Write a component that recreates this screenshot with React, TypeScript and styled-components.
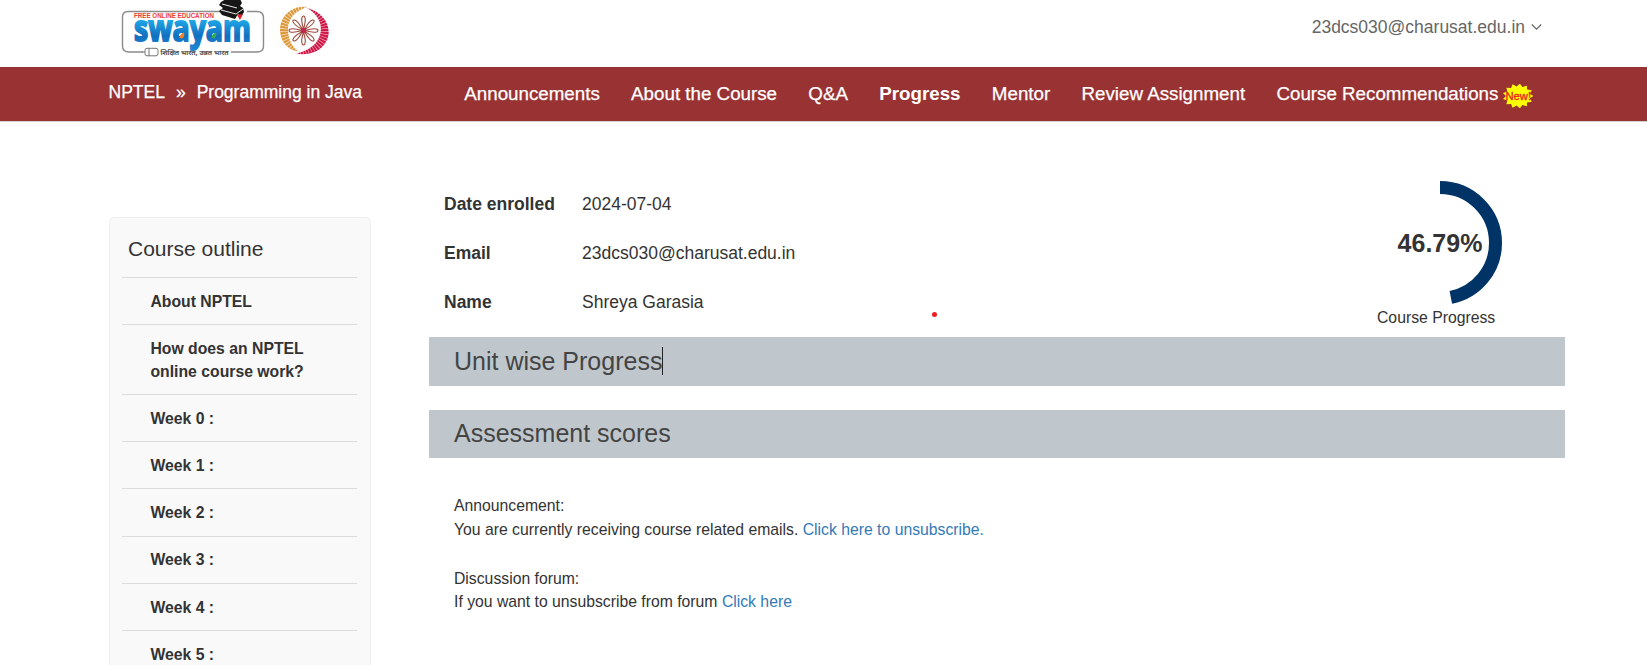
import React from "react";
import styled, { createGlobalStyle } from "styled-components";

const GlobalStyle = createGlobalStyle`
  *, *::before, *::after { box-sizing: border-box; }
  html, body { margin: 0; background: #fff; }
  body {
    font-family: "Liberation Sans", Arial, Helvetica, sans-serif;
    font-size: 15.75px;
    color: #333;
    height: 665px;
    overflow: hidden;
  }
`;

const Page = styled.div`
  position: relative;
  height: 665px;
  overflow: hidden;
`;

const Header = styled.header`
  display: flex;
  justify-content: space-between;
  height: 67px;
  padding: 0 105.5px 0 121px;
`;

const Logos = styled.div`
  display: flex;
  gap: 14px;
`;

const Account = styled.button`
  display: flex;
  align-items: center;
  gap: 5.5px;
  height: 54px;
  padding: 0;
  border: 0;
  background: none;
  font: inherit;
  font-size: 17.5px;
  color: #666;
`;

const NavBar = styled.nav`
  display: flex;
  height: 55px;
  padding-left: 108.5px;
  background: #993333;
  border-bottom: 1px solid #d3cfcf;
  color: #fff;
`;

const Crumbs = styled.div`
  display: flex;
  width: 355.8px;
  height: 50px;
  align-items: center;
  gap: 11px;
  font-size: 17.5px;
  white-space: nowrap;
  -webkit-text-stroke: 0.25px #fff;
`;

const NavLinks = styled.div`
  display: flex;
  align-items: center;
  height: 53px;
  gap: 31.3px;
  font-size: 18.75px;
  white-space: nowrap;
`;

const NavLink = styled.a<{ $active?: boolean }>`
  display: flex;
  align-items: center;
  gap: 5px;
  font-weight: ${(p) => (p.$active ? 700 : 400)};
  -webkit-text-stroke: ${(p) => (p.$active ? "0" : "0.25px #fff")};
`;

const Body = styled.main`
  display: flex;
  align-items: flex-start;
  padding-left: 109px;
`;

const Sidebar = styled.aside`
  width: 262px;
  height: 520px;
  margin-top: 95px;
  padding: 0 12px;
  border: 1px solid #efefef;
  border-radius: 5px;
  background: #f9f9f9;
`;

const SidebarTitle = styled.h2`
  margin: 0;
  padding-left: 6px;
  height: 59px;
  line-height: 61px;
  font-size: 21px;
  font-weight: 400;
`;

const OutlineItem = styled.div`
  padding: 12.8px 28px 10.95px 28.5px;
  border-top: 1px solid #dcdcdc;
  line-height: 22.5px;
  font-weight: 700;
  width: 235px;
`;

const Content = styled.section`
  width: 1136px;
  margin-left: 58px;
`;

const Summary = styled.div`
  display: flex;
  justify-content: space-between;
  height: 215px;
  padding: 57px 63px 0 15px;
`;

const Details = styled.dl`
  display: grid;
  grid-template-columns: 138px auto;
  grid-auto-rows: 49px;
  align-items: center;
  margin: 1px 0 0;
  height: 147px;
  font-size: 17.5px;
`;

const Term = styled.dt`
  font-weight: 700;
`;

const Value = styled.dd`
  margin: 0;
`;

const Gauge = styled.div`
  width: 125px;
  padding-top: 2px;
`;

const Dial = styled.div`
  display: grid;
  margin-left: 1px;
  width: 124px;
  height: 124px;
  > * { grid-area: 1 / 1; }
`;

const Percent = styled.strong`
  place-self: center;
  font-size: 25px;
  line-height: 124px;
`;

const GaugeLabel = styled.div`
  line-height: 25px;
  white-space: nowrap;
`;

const Bar = styled.h3<{ $height: number }>`
  display: flex;
  align-items: center;
  height: ${(p) => p.$height}px;
  margin: 0 0 24px;
  padding: 0 0 1px 25px;
  background: #bfc7cd;
  color: #444;
  font-size: 25px;
  font-weight: 400;
`;

const Caret = styled.span`
  width: 1px;
  height: 28px;
  background: #222;
`;

const Notices = styled.div`
  padding: 12px 25px 0;
  line-height: 23.5px;
`;

const Notice = styled.p`
  margin: 0 0 25.5px;
`;

const Link = styled.a`
  color: #337ab7;
`;

const Pointer = styled.span`
  position: absolute;
  left: 931.5px;
  top: 312px;
  width: 5px;
  height: 5px;
  border-radius: 50%;
  background: #ed1c24;
`;

const BadgeIcon = styled.svg`
  margin-top: 4px;
`;

const SwayamLogo = () => (
  <svg width="144" height="60" viewBox="121 0 144 60">
    <defs>
      <linearGradient id="wordmark" x1="0" y1="20" x2="0" y2="49" gradientUnits="userSpaceOnUse">
        <stop offset="0" stopColor="#1fa8e6" />
        <stop offset="0.55" stopColor="#126fc0" />
        <stop offset="1" stopColor="#1e86d0" />
      </linearGradient>
    </defs>
    <path d="M143 52H129Q122.500 52 122.500 46V17Q122.500 11.500 128 11.500H257Q263.500 11.500 263.500 18V46Q263.500 52 257 52H231" fill="none" stroke="#8b8b8b" strokeWidth="1.4" />
    <rect x="145" y="48.300" width="13" height="7.500" rx="2" fill="#fff" stroke="#777" strokeWidth="1" />
    <path d="M149 48.300V56M142 52H145" stroke="#777" />
    <rect x="238" y="8" width="9" height="8" fill="#fff" />
    <text x="134" y="18.300" fontSize="6.500" fontWeight="700" fill="#f03a35" fontFamily="Liberation Sans" textLength="80" lengthAdjust="spacingAndGlyphs">FREE ONLINE EDUCATION</text>
    <text x="134" y="41" fontSize="36.500" fontWeight="700" fill="url(#wordmark)" stroke="url(#wordmark)" strokeWidth="2" fontFamily="Open Sans" textLength="117" lengthAdjust="spacingAndGlyphs">swayam</text>
    <path d="M179.500 38Q180 33.500 184 32.500Q185 37 182 38.500Z" fill="#f58220" />
    <path d="M211.500 38Q212 33.500 216 32.500Q217 37 214 38.500Z" fill="#35a853" />
    <path d="M221 2L226 -1H240L242 3L240 6L243 8L244 12L241 17L238 14L235 19L222 15L219 11L223 8L219 5Z" fill="#161616" />
    <path d="M222 4L237 8M221 10L236 14L243 9" fill="none" stroke="#fff" strokeWidth="0.900" />
    <path d="M237 15L243 14L240 20Z" fill="#e8222a" />
    <text x="160.500" y="54.500" fontSize="6.500" fill="#444" stroke="#444" strokeWidth="0.200" fontFamily="Noto Sans Devanagari, sans-serif" textLength="68" lengthAdjust="spacingAndGlyphs">शिक्षित भारत, उन्नत भारत</text>
  </svg>
);

const Emblem = () => (
  <svg width="50" height="60" viewBox="279 0 50 60">
    <path d="M307 7C291 5 279.500 17 280 31C280.500 42 288 50 298 51.500C291 45 288 38 288 29C288 19 295 11 307 7Z" fill="#dc9a3c" />
    <path d="M307 8C320 11 329 21 328.700 33C327.500 47 314 57 296 53.500C309 51 320 43 320.800 30C321.500 22 317 14 307 8Z" fill="#cf1748" />
    <path d="M305 9C292 10 284 20 284 31C284.500 41 290 47 298 51.500" fill="none" stroke="#fff" strokeWidth="10" strokeDasharray="0.700 2.100" opacity="0.750" />
    <path d="M308 8.500C318 13 325 21 324.500 33C323 44 312 53 297 53.500" fill="none" stroke="#fff" strokeWidth="10" strokeDasharray="0.600 2.100" opacity="0.700" />
    <g fill="#fff" stroke="#9a4a3c" strokeWidth="1.1">
      {[0, 45, 90, 135, 180, 225, 270, 315].map((a) => (
        <path key={a} transform={`rotate(${a} 303.500 30.500)`} d="M303.500 29Q300.700 20 302.300 16.800Q303.500 15.200 304.700 16.800Q306.300 20 303.500 29Z" />
      ))}
    </g>
    <circle cx="303.500" cy="30.500" r="2.800" fill="#c2274a" />
  </svg>
);

const burst = Array.from({ length: 26 }, (_, i) => {
  const a = (i * Math.PI) / 13;
  const k = i % 2 ? 0.8 : 1.04;
  return `${(15 + 15 * k * Math.cos(a)).toFixed(1)},${(12 + 12 * k * Math.sin(a)).toFixed(1)}`;
}).join(" ");

const NewBadge = () => (
  <BadgeIcon width="30" height="24" viewBox="0 0 30 24">
    <polygon points={burst} fill="#ffff00" />
    <text x="2.500" y="16" fontSize="11" fontFamily="Liberation Sans" fill="#e8201a" stroke="#e8201a" strokeWidth="0.300" textLength="25.500" lengthAdjust="spacingAndGlyphs">New!</text>
  </BadgeIcon>
);

const navItems = ["Announcements", "About the Course", "Q&A", "Progress", "Mentor", "Review Assignment", "Course Recommendations"];
const outline = ["About NPTEL", "How does an NPTEL online course work?", "Week 0 :", "Week 1 :", "Week 2 :", "Week 3 :", "Week 4 :", "Week 5 :"];
const details = [
  ["Date enrolled", "2024-07-04"],
  ["Email", "23dcs030@charusat.edu.in"],
  ["Name", "Shreya Garasia"],
];

export default function App() {
  const circumference = 2 * Math.PI * 55.5;
  return (
    <Page>
      <GlobalStyle />
      <Header>
        <Logos>
          <SwayamLogo />
          <Emblem />
        </Logos>
        <Account>
          23dcs030@charusat.edu.in
          <svg width="11" height="8" viewBox="0 0 11 8">
            <path d="M0.800 1.500L5.500 6.200L10.200 1.500" fill="none" stroke="#666" strokeWidth="1.200" />
          </svg>
        </Account>
      </Header>
      <NavBar>
        <Crumbs>
          <span>NPTEL</span>
          <span>»</span>
          <span>Programming in Java</span>
        </Crumbs>
        <NavLinks>
          {navItems.map((item) => (
            <NavLink key={item} $active={item === "Progress"}>
              {item}
              {item === "Course Recommendations" && <NewBadge />}
            </NavLink>
          ))}
        </NavLinks>
      </NavBar>
      <Body>
        <Sidebar>
          <SidebarTitle>Course outline</SidebarTitle>
          {outline.map((item) => (
            <OutlineItem key={item}>{item}</OutlineItem>
          ))}
        </Sidebar>
        <Content>
          <Summary>
            <Details>
              {details.map(([term, value]) => (
                <React.Fragment key={term}>
                  <Term>{term}</Term>
                  <Value>{value}</Value>
                </React.Fragment>
              ))}
            </Details>
            <Gauge>
              <Dial>
                <svg width="124" height="124" viewBox="0 0 124 124">
                  <circle
                    cx="62"
                    cy="62"
                    r="55.5"
                    fill="none"
                    stroke="#003366"
                    strokeWidth="13"
                    strokeDasharray={`${circumference * 0.4679} ${circumference}`}
                    transform="rotate(-90 62 62)"
                  />
                </svg>
                <Percent>46.79%</Percent>
              </Dial>
              <GaugeLabel>Course Progress</GaugeLabel>
            </Gauge>
          </Summary>
          <Bar $height={49}>
            Unit wise Progress
            <Caret />
          </Bar>
          <Bar $height={48}>Assessment scores</Bar>
          <Notices>
            <Notice>
              Announcement:
              <br />
              You are currently receiving course related emails. <Link>Click here to unsubscribe.</Link>
            </Notice>
            <Notice>
              Discussion forum:
              <br />
              If you want to unsubscribe from forum <Link>Click here</Link>
            </Notice>
          </Notices>
        </Content>
      </Body>
      <Pointer />
    </Page>
  );
}
